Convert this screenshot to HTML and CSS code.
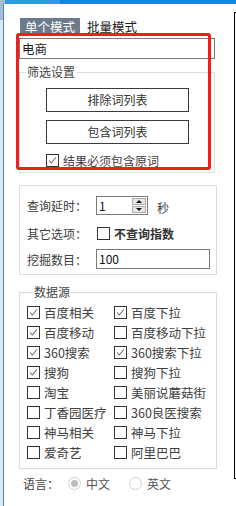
FILE: index.html
```html
<!DOCTYPE html>
<html lang="zh-CN">
<head>
<meta charset="utf-8">
<link rel="stylesheet" href="styles.css">
</head>
<body>
<div class="page">
  <div class="topbar"><span class="corner"></span><span class="topbar-light"></span><span class="topbar-dark"></span></div>
  <div class="frame">
    <div class="strip"><span class="strip-gray"><i class="strip-icon"></i></span><span class="strip-blue"></span></div>
    <div class="main">
      <div class="tabs">
        <div class="tab active">单个模式</div>
        <div class="tab">批量模式</div>
      </div>
      <div class="keyword">电商</div>

      <fieldset class="box box1">
        <legend>筛选设置</legend>
        <div class="btn first">排除词列表</div>
        <div class="btn">包含词列表</div>
        <label class="chk-row must">
          <span class="chk on"><svg viewBox="0 0 13 13"><polyline points="2.5,6.5 5,9.5 10.5,3"/></svg></span>
          <span>结果必须包含原词</span>
        </label>
      </fieldset>

      <fieldset class="box box2">
        <div class="frow r1">
          <span class="flabel">查询延时：</span>
          <div class="spin">
            <span class="spin-val">1</span>
            <span class="spin-btns">
              <span class="sb up"><i></i></span>
              <span class="sb down"><i></i></span>
            </span>
          </div>
          <span class="unit">秒</span>
        </div>
        <div class="frow r2">
          <span class="flabel">其它选项：</span>
          <span class="chk"></span>
          <b class="bold">不查询指数</b>
        </div>
        <div class="frow r3">
          <span class="flabel">挖掘数目：</span>
          <div class="num">100</div>
        </div>
      </fieldset>

      <fieldset class="box box3">
        <legend>数据源</legend>
        <div class="grid">
          <div class="item"><span class="chk on"><svg viewBox="0 0 13 13"><polyline points="2.5,6.5 5,9.5 10.5,3"/></svg></span>百度相关</div>
          <div class="item"><span class="chk on"><svg viewBox="0 0 13 13"><polyline points="2.5,6.5 5,9.5 10.5,3"/></svg></span>百度下拉</div>
          <div class="item"><span class="chk on"><svg viewBox="0 0 13 13"><polyline points="2.5,6.5 5,9.5 10.5,3"/></svg></span>百度移动</div>
          <div class="item"><span class="chk"></span>百度移动下拉</div>
          <div class="item"><span class="chk on"><svg viewBox="0 0 13 13"><polyline points="2.5,6.5 5,9.5 10.5,3"/></svg></span>360搜索</div>
          <div class="item"><span class="chk on"><svg viewBox="0 0 13 13"><polyline points="2.5,6.5 5,9.5 10.5,3"/></svg></span>360搜索下拉</div>
          <div class="item"><span class="chk on"><svg viewBox="0 0 13 13"><polyline points="2.5,6.5 5,9.5 10.5,3"/></svg></span>搜狗</div>
          <div class="item"><span class="chk"></span>搜狗下拉</div>
          <div class="item"><span class="chk"></span>淘宝</div>
          <div class="item"><span class="chk"></span>美丽说蘑菇街</div>
          <div class="item"><span class="chk"></span>丁香园医疗</div>
          <div class="item"><span class="chk"></span>360良医搜索</div>
          <div class="item"><span class="chk"></span>神马相关</div>
          <div class="item"><span class="chk"></span>神马下拉</div>
          <div class="item"><span class="chk"></span>爱奇艺</div>
          <div class="item"><span class="chk"></span>阿里巴巴</div>
        </div>
      </fieldset>

      <div class="lang">
        <span class="lang-label">语言：</span>
        <span class="radio on"><i></i></span><span class="rtext">中文</span>
        <span class="radio"></span><span class="rtext">英文</span>
      </div>
    </div>
    <div class="side"></div>
  </div>
  <div class="highlight"></div>
</div>
</body>
</html>
```
FILE: styles.css
```css
html, body {
  margin: 0;
  padding: 0;
  background: #ffffff;
  overflow: hidden;
}
body {
  width: 236px;
  height: 506px;
  font-family: "Noto Sans CJK SC", "Microsoft YaHei", "Noto Sans", sans-serif;
  font-size: 12px;
  color: #404040;
}
.page {
  position: relative;
  width: 236px;
  height: 506px;
  display: flex;
  flex-direction: column;
}
.topbar {
  display: flex;
  height: 4px;
  flex: none;
}
.corner { width: 5px; background: #a9bad2; }
.topbar-light { width: 55px; background: #2d9be0; }
.topbar-dark { flex: 1; background: #0a8ad6; }

.frame {
  flex: 1;
  display: flex;
  min-height: 0;
}
.strip {
  display: flex;
  width: 5px;
  flex: none;
}
.strip-gray {
  width: 3px;
  background: #e4e6ea;
  display: flex;
  flex-direction: column;
}
.strip-icon {
  display: block;
  height: 16px;
  background: #a9bad2;
}
.strip-blue { width: 1px; background: #2f8fd8; }

.main {
  width: 229px;
  flex: none;
  display: flex;
  flex-direction: column;
  padding-left: 14px;
  box-sizing: border-box;
}

.tabs {
  display: flex;
  margin-top: 14px;
  margin-left: 1px;
  gap: 2px;
  height: 17px;
}
.tab {
  width: 60px;
  text-align: center;
  line-height: 17px;
  font-size: 12.5px;
  color: #222;
}
.tab.active {
  background: #6c7a8b;
  color: #ffffff;
}

.keyword {
  margin-top: 3px;
  width: 196px;
  height: 21px;
  box-sizing: border-box;
  border: 1px solid #7a7a7a;
  line-height: 19px;
  padding-left: 2px;
  font-size: 12.5px;
  color: #222;
}

.box {
  margin: 0;
  padding: 0;
  min-width: 0;
  border: 1px solid #dcdcdc;
  box-sizing: border-box;
}
.box legend {
  margin-left: 6px;
  padding: 0 1px;
  line-height: 16px;
  color: #444;
}
.box1 {
  margin-top: 5px;
  width: 196px;
  padding-bottom: 4px;
}
.btn {
  margin-left: 26px;
  width: 143px;
  height: 24px;
  box-sizing: border-box;
  border: 1px solid #3c3c3c;
  text-align: center;
  line-height: 22px;
  color: #333;
}
.btn.first { margin-top: 8px; }
.btn + .btn { margin-top: 8px; }
.chk-row {
  display: flex;
  align-items: center;
  height: 16px;
  gap: 4px;
}
.must {
  margin-top: 8px;
  margin-left: 26px;
}

.chk {
  width: 13px;
  height: 13px;
  box-sizing: border-box;
  border: 1px solid #333;
  background: #fff;
  flex: none;
  display: inline-flex;
}
.chk svg {
  width: 11px;
  height: 11px;
}
.chk svg polyline {
  fill: none;
  stroke: #666;
  stroke-width: 1.2;
}

.box2 {
  margin-top: 12px;
  width: 198px;
  padding: 10px 0 5px 7px;
}
.frow {
  display: flex;
  align-items: center;
}
.flabel {
  width: 69px;
  flex: none;
}
.r1 { height: 19px; }
.r2 { height: 16px; margin-top: 10px; }
.r3 { height: 20px; margin-top: 8px; }
.spin {
  width: 52px;
  height: 19px;
  box-sizing: border-box;
  border: 1px solid #7a7a7a;
  display: flex;
  justify-content: space-between;
}
.spin-val {
  padding-left: 2px;
  line-height: 17px;
  color: #111;
}
.spin-btns {
  display: flex;
  flex-direction: column;
  width: 14px;
  margin: 1px 1px 1px 0;
  gap: 1px;
}
.sb {
  flex: 1;
  background: #e6e6e6;
  border: 1px solid #adadad;
  box-sizing: border-box;
  display: flex;
  align-items: center;
  justify-content: center;
}
.sb i {
  width: 0;
  height: 0;
  border-left: 3px solid transparent;
  border-right: 3px solid transparent;
}
.sb.up i { border-bottom: 3px solid #111; }
.sb.down i { border-top: 3px solid #111; }
.unit {
  margin-left: 9px;
  margin-top: 3px;
}
.r2 .chk { margin-left: 1px; }
.bold {
  margin-left: 4px;
  font-weight: bold;
  color: #333;
}
.num {
  width: 114px;
  height: 20px;
  box-sizing: border-box;
  border: 1px solid #7a7a7a;
  padding-left: 2px;
  line-height: 18px;
  color: #111;
}

.box3 {
  margin-top: 9px;
  width: 198px;
  padding: 2px 0 6px 7px;
}
.grid {
  display: grid;
  grid-template-columns: 87px 1fr;
  grid-auto-rows: 20px;
}
.item {
  display: flex;
  align-items: center;
  gap: 4px;
  white-space: nowrap;
  font-size: 12.5px;
}

.lang {
  display: flex;
  align-items: center;
  height: 16px;
  margin-top: 6px;
  margin-left: 4px;
}
.lang-label { width: 45px; }
.radio {
  width: 13px;
  height: 13px;
  box-sizing: border-box;
  border: 1px solid #cfcfcf;
  border-radius: 50%;
  display: inline-flex;
  align-items: center;
  justify-content: center;
  flex: none;
}
.radio.on i {
  width: 7px;
  height: 7px;
  border-radius: 50%;
  background: #bdbdbd;
}
.rtext {
  margin-left: 5px;
  color: #555;
}
.rtext + .radio { margin-left: 19px; }

.side {
  flex: none;
  margin-top: 8px;
  height: 467px;
  width: 2px;
  box-sizing: border-box;
  border: 1px solid #000;
  border-right: none;
}

.highlight {
  position: absolute;
  left: 16px;
  top: 33px;
  width: 195px;
  height: 137px;
  box-sizing: border-box;
  border: 3px solid #f51d1a;
  border-radius: 3px;
  pointer-events: none;
}
```
